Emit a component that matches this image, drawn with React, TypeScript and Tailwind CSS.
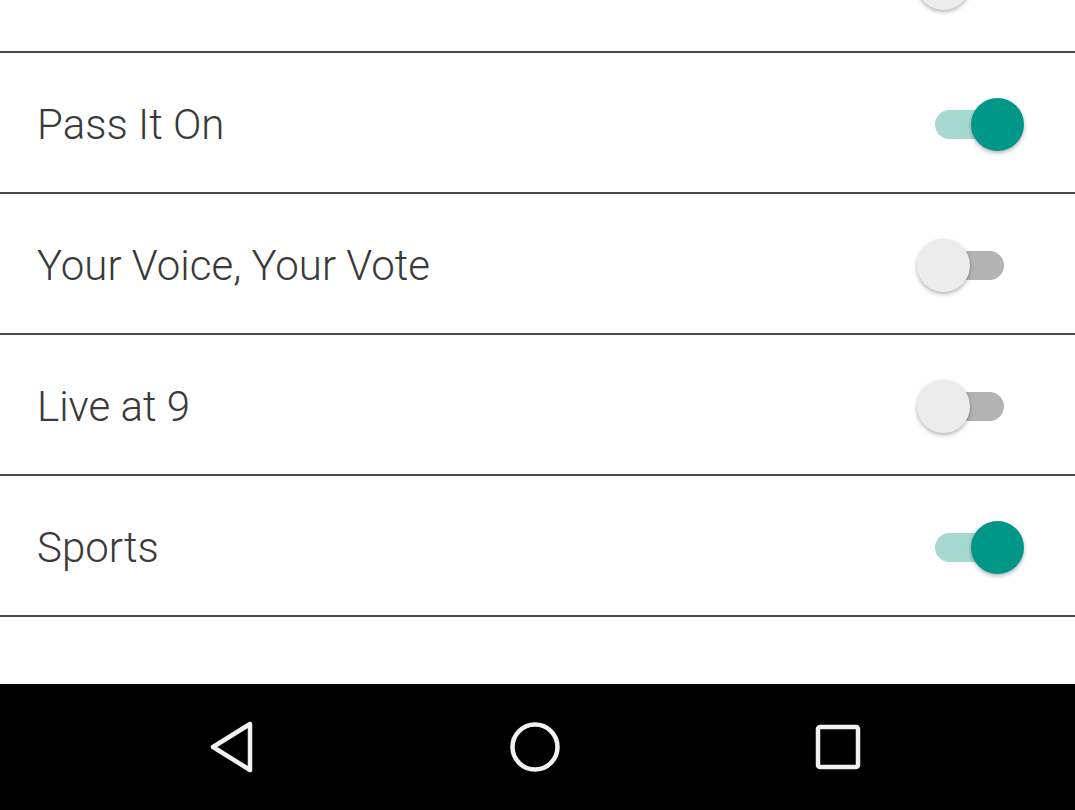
import { useState } from "react";

interface Topic {
  name: string;
  on: boolean;
}

const initialTopics: Topic[] = [
  { name: "Local News Now", on: false },
  { name: "Pass It On", on: true },
  { name: "Your Voice, Your Vote", on: false },
  { name: "Live at 9", on: false },
  { name: "Sports", on: true },
];

function Toggle({ on, onClick }: { on: boolean; onClick: () => void }) {
  return (
    <button onClick={onClick} className="relative w-[106px] h-[53px] shrink-0">
      <span
        className={`absolute left-[18px] top-[12px] w-[69px] h-[29px] rounded-full ${
          on ? "bg-[#a7d9d3]" : "bg-[#b3b3b3]"
        }`}
      />
      <span
        className={`absolute top-0 w-[53px] h-[53px] rounded-full shadow-[0_2px_4px_rgba(0,0,0,0.3)] ${
          on ? "left-[54px] bg-[#009688]" : "left-0 bg-[#ececec]"
        }`}
      />
    </button>
  );
}

export default function App() {
  const [topics, setTopics] = useState<Topic[]>(initialTopics);

  const flip = (i: number) =>
    setTopics((t) => t.map((x, j) => (j === i ? { ...x, on: !x.on } : x)));

  return (
    <div className="h-[810px] w-full flex flex-col bg-white overflow-hidden font-['Roboto',sans-serif]">
      {/* Topic list (scrolled a little) */}
      <div className="flex-1 overflow-hidden">
        <div className="-mt-[88px]">
          {topics.map((t, i) => (
            <div key={t.name}>
              <div className="h-[139px] flex items-center justify-between pt-[4px] pl-[37px] pr-[52px]">
                <span className="text-[42px] font-light text-[#3a3a3a]">{t.name}</span>
                <Toggle on={t.on} onClick={() => flip(i)} />
              </div>
              <div className="h-[2px] bg-[#4a4a4a]" />
            </div>
          ))}
        </div>
      </div>

      {/* Android nav bar */}
      <div className="h-[126px] bg-black flex items-center justify-center gap-[253px] pr-[6px]">
        <svg width="48" height="52" viewBox="0 0 48 52" fill="none">
          <path d="M42 3 L5 26 L42 49 Z" stroke="#f2f2f2" strokeWidth="4.5" strokeLinejoin="round" />
        </svg>
        <svg width="52" height="52" viewBox="0 0 52 52" fill="none">
          <circle cx="26" cy="26" r="22.5" stroke="#f2f2f2" strokeWidth="4.5" />
        </svg>
        <svg width="48" height="48" viewBox="0 0 48 48" fill="none">
          <rect x="4" y="4" width="40" height="40" rx="2" stroke="#f2f2f2" strokeWidth="4.5" />
        </svg>
      </div>
    </div>
  );
}
